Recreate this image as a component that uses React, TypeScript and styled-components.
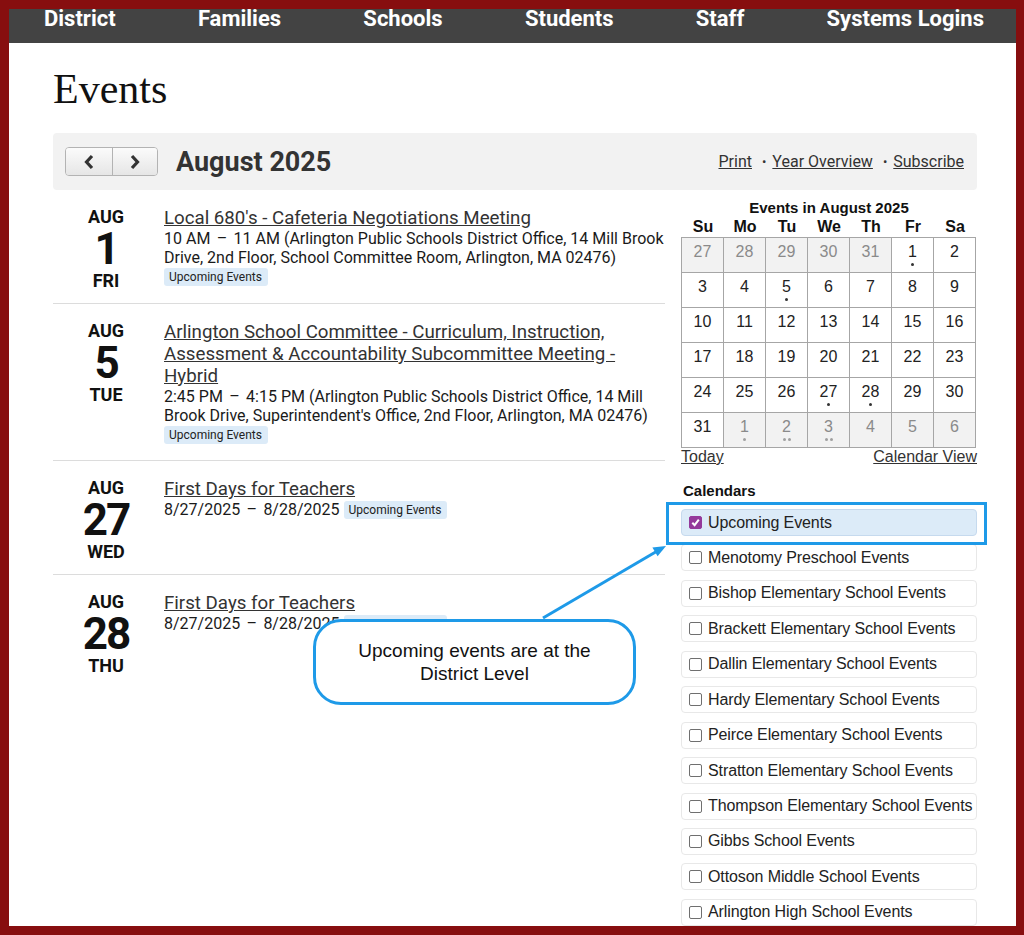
import React from "react";
import styled, { createGlobalStyle } from "styled-components";

const GlobalStyle = createGlobalStyle`
  html, body {
    margin: 0;
    padding: 0;
  }
  body {
    font-family: Roboto, "Liberation Sans", sans-serif;
  }
`;

const navItems = ["District", "Families", "Schools", "Students", "Staff", "Systems Logins"];

type EventItem = {
  month: string;
  day: string;
  weekday: string;
  title: string;
  start: string;
  rest: string;
  inlineTag?: boolean;
};

const events: EventItem[] = [
  {
    month: "AUG",
    day: "1",
    weekday: "FRI",
    title: "Local 680's - Cafeteria Negotiations Meeting",
    start: "10 AM",
    rest: "11 AM (Arlington Public Schools District Office, 14 Mill Brook Drive, 2nd Floor, School Committee Room, Arlington, MA 02476)",
  },
  {
    month: "AUG",
    day: "5",
    weekday: "TUE",
    title:
      "Arlington School Committee - Curriculum, Instruction, Assessment & Accountability Subcommittee Meeting - Hybrid",
    start: "2:45 PM",
    rest: "4:15 PM (Arlington Public Schools District Office, 14 Mill Brook Drive, Superintendent's Office, 2nd Floor, Arlington, MA 02476)",
  },
  {
    month: "AUG",
    day: "27",
    weekday: "WED",
    title: "First Days for Teachers",
    start: "8/27/2025",
    rest: "8/28/2025",
    inlineTag: true,
  },
  {
    month: "AUG",
    day: "28",
    weekday: "THU",
    title: "First Days for Teachers",
    start: "8/27/2025",
    rest: "8/28/2025",
    inlineTag: true,
  },
];

type Cell = { d: number; muted?: boolean; dots?: number };

const weeks: Cell[][] = [
  [
    { d: 27, muted: true },
    { d: 28, muted: true },
    { d: 29, muted: true },
    { d: 30, muted: true },
    { d: 31, muted: true },
    { d: 1, dots: 1 },
    { d: 2 },
  ],
  [{ d: 3 }, { d: 4 }, { d: 5, dots: 1 }, { d: 6 }, { d: 7 }, { d: 8 }, { d: 9 }],
  [{ d: 10 }, { d: 11 }, { d: 12 }, { d: 13 }, { d: 14 }, { d: 15 }, { d: 16 }],
  [{ d: 17 }, { d: 18 }, { d: 19 }, { d: 20 }, { d: 21 }, { d: 22 }, { d: 23 }],
  [{ d: 24 }, { d: 25 }, { d: 26 }, { d: 27, dots: 1 }, { d: 28, dots: 1 }, { d: 29 }, { d: 30 }],
  [
    { d: 31 },
    { d: 1, muted: true, dots: 1 },
    { d: 2, muted: true, dots: 2 },
    { d: 3, muted: true, dots: 2 },
    { d: 4, muted: true },
    { d: 5, muted: true },
    { d: 6, muted: true },
  ],
];

const weekdays = ["Su", "Mo", "Tu", "We", "Th", "Fr", "Sa"];

const calendars = [
  "Upcoming Events",
  "Menotomy Preschool Events",
  "Bishop Elementary School Events",
  "Brackett Elementary School Events",
  "Dallin Elementary School Events",
  "Hardy Elementary School Events",
  "Peirce Elementary School Events",
  "Stratton Elementary School Events",
  "Thompson Elementary School Events",
  "Gibbs School Events",
  "Ottoson Middle School Events",
  "Arlington High School Events",
];

export default function App() {
  return (
    <>
      <GlobalStyle />
      <Frame>
        <Page>
          <Nav>
            {navItems.map((n) => (
              <NavItem key={n} href="#">
                {n}
              </NavItem>
            ))}
          </Nav>
          <Main>
            <Heading>Events</Heading>
            <Toolbar>
              <ArrowGroup>
                <ArrowButton aria-label="Previous month">
                  <svg width="12" height="18" viewBox="0 0 12 18">
                    <polyline points="9,3 3.5,9 9,15" fill="none" stroke="#333" strokeWidth="3.2" />
                  </svg>
                </ArrowButton>
                <ArrowButton aria-label="Next month">
                  <svg width="12" height="18" viewBox="0 0 12 18">
                    <polyline points="3,3 8.5,9 3,15" fill="none" stroke="#333" strokeWidth="3.2" />
                  </svg>
                </ArrowButton>
              </ArrowGroup>
              <MonthTitle>August 2025</MonthTitle>
              <ToolLinks>
                <ToolLink href="#">Print</ToolLink>
                <Bullet>•</Bullet>
                <ToolLink href="#">Year Overview</ToolLink>
                <Bullet>•</Bullet>
                <ToolLink href="#">Subscribe</ToolLink>
              </ToolLinks>
            </Toolbar>
            <Columns>
              <EventList>
                {events.map((e, i) => (
                  <EventRow key={i} $last={i === events.length - 1}>
                    <DateBlock>
                      <DateSmall>{e.month}</DateSmall>
                      <DateBig>{e.day}</DateBig>
                      <DateSmall>{e.weekday}</DateSmall>
                    </DateBlock>
                    <Info>
                      <EventTitle href="#">{e.title}</EventTitle>
                      <Detail>
                        {e.start} <Dash>–</Dash> {e.rest}
                        {e.inlineTag && <Tag $inline>Upcoming Events</Tag>}
                      </Detail>
                      {!e.inlineTag && <Tag>Upcoming Events</Tag>}
                    </Info>
                  </EventRow>
                ))}
              </EventList>
              <Sidebar>
                <CalCaption>Events in August 2025</CalCaption>
                <WeekHeader>
                  {weekdays.map((w) => (
                    <span key={w}>{w}</span>
                  ))}
                </WeekHeader>
                <Grid>
                  {weeks.flat().map((c, i) => (
                    <DayCell key={i} $muted={c.muted}>
                      <span>{c.d}</span>
                      <Dots>
                        {Array.from({ length: c.dots || 0 }).map((_, j) => (
                          <Dot key={j} $muted={c.muted} />
                        ))}
                      </Dots>
                    </DayCell>
                  ))}
                </Grid>
                <CalFooter>
                  <FooterLink href="#">Today</FooterLink>
                  <FooterLink href="#">Calendar View</FooterLink>
                </CalFooter>
                <CalHeading>Calendars</CalHeading>
                <CalList>
                  {calendars.map((c, i) => (
                    <CalItem key={c} $checked={i === 0}>
                      <Box $checked={i === 0}>
                        {i === 0 && (
                          <svg width="9" height="9" viewBox="0 0 9 9">
                            <polyline
                              points="1.3,4.8 3.6,7.2 7.8,1.6"
                              fill="none"
                              stroke="#fff"
                              strokeWidth="2"
                            />
                          </svg>
                        )}
                      </Box>
                      {c}
                    </CalItem>
                  ))}
                </CalList>
              </Sidebar>
            </Columns>
          </Main>

          <Highlight />
          <Pointer width="150" height="95" viewBox="0 0 150 95">
            <line x1="14" y1="84" x2="130" y2="16" stroke="#1e9ae8" strokeWidth="3" />
            <polygon points="137,12 123.4,13.5 128.6,22.3" fill="#1e9ae8" />
          </Pointer>
          <Callout>
            Upcoming events are at the
            <br />
            District Level
          </Callout>
        </Page>
      </Frame>
    </>
  );
}

const Frame = styled.div`
  box-sizing: border-box;
  width: 1024px;
  height: 935px;
  background: #870e0f;
  padding: 9px 8px 9px 9px;
`;

const Page = styled.div`
  position: relative;
  height: 100%;
  background: #fff;
  overflow: hidden;
`;

const Nav = styled.nav`
  height: 34px;
  background: #434343;
  display: flex;
  justify-content: space-between;
  align-items: flex-start;
  padding: 0 32px 0 35px;
`;

const NavItem = styled.a`
  color: #fff;
  font: 700 22px/19px Roboto, sans-serif;
  text-decoration: none;
`;

const Main = styled.main`
  padding: 0 39px 0 44px;
`;

const Heading = styled.h1`
  margin: 26px 0 24px;
  font: 400 42px/40px "Liberation Serif", serif;
  color: #111;
`;

const Toolbar = styled.div`
  display: flex;
  align-items: center;
  height: 57px;
  padding: 0 13px 0 12px;
  background: #f2f2f2;
  border-radius: 4px;
`;

const ArrowGroup = styled.div`
  display: flex;
  border: 1px solid #b3b3b3;
  border-radius: 4px;
  overflow: hidden;
`;

const ArrowButton = styled.button`
  width: 46px;
  height: 27px;
  padding: 0;
  border: 0;
  background: linear-gradient(#fbfbfb, #e6e6e6);
  display: flex;
  align-items: center;
  justify-content: center;
  & + & {
    width: 45px;
    border-left: 1px solid #b3b3b3;
  }
`;

const MonthTitle = styled.h2`
  margin: 0 0 0 18px;
  font: 700 27px/32px Roboto, sans-serif;
  color: #333;
`;

const ToolLinks = styled.div`
  margin-left: auto;
  display: flex;
  align-items: center;
  font: 400 16px/20px Roboto, sans-serif;
  color: #333;
`;

const ToolLink = styled.a`
  color: #333;
  text-decoration: underline;
`;

const Bullet = styled.span`
  margin: 0 6px 0 10px;
  font-size: 13px;
`;

const Columns = styled.div`
  display: grid;
  grid-template-columns: 612px 296px;
  column-gap: 16px;
  align-items: start;
`;

const EventList = styled.div`
  display: flex;
  flex-direction: column;
`;

const EventRow = styled.div<{ $last?: boolean }>`
  display: flex;
  padding: 17px 0 12px;
  border-bottom: ${(p) => (p.$last ? "0" : "1px solid #dcdcdc")};
`;

const DateBlock = styled.div`
  width: 106px;
  flex-shrink: 0;
  margin-right: 5px;
  text-align: center;
  color: #111;
`;

const DateSmall = styled.div`
  font: 700 18px/20px Roboto, sans-serif;
`;

const DateBig = styled.div`
  font: 700 44px/44px Roboto, sans-serif;
  letter-spacing: -2px;
`;

const Info = styled.div`
  flex: 1;
  min-width: 0;
`;

const EventTitle = styled.a`
  display: block;
  font: 400 18.7px/22px Roboto, sans-serif;
  color: #333;
  text-decoration: underline;
`;

const Detail = styled.div`
  font: 400 16px/19px Roboto, sans-serif;
  color: #1a1a1a;
`;

const Dash = styled.span`
  margin: 0 2.4px;
`;

const Tag = styled.span<{ $inline?: boolean }>`
  display: inline-block;
  background: #dcebf8;
  color: #222;
  font: 400 12px/18px Roboto, sans-serif;
  padding: 0 6px 0 5px;
  border-radius: 3px;
  margin: ${(p) => (p.$inline ? "0 0 0 4px" : "1px 0 4px")};
  vertical-align: ${(p) => (p.$inline ? "1px" : "top")};
`;

const Sidebar = styled.aside`
  font-family: "Liberation Sans", Arial, sans-serif;
  color: #111;
`;

const CalCaption = styled.div`
  margin-top: 8px;
  text-align: center;
  font: 700 15px/19px "Liberation Sans", Arial, sans-serif;
`;

const WeekHeader = styled.div`
  display: grid;
  grid-template-columns: repeat(7, 42px);
  padding-left: 1px;
  font: 700 16px/20px "Liberation Sans", Arial, sans-serif;
  text-align: center;
`;

const Grid = styled.div`
  display: grid;
  grid-template-columns: repeat(7, 42px);
  width: max-content;
  border-left: 1px solid #a6a6a6;
  border-top: 1px solid #a6a6a6;
`;

const DayCell = styled.div<{ $muted?: boolean }>`
  box-sizing: border-box;
  height: 35px;
  border-right: 1px solid #a6a6a6;
  border-bottom: 1px solid #a6a6a6;
  background: ${(p) => (p.$muted ? "#f2f2f2" : "#fff")};
  color: ${(p) => (p.$muted ? "#8a8a8a" : "#222")};
  font: 400 16px/18px "Liberation Sans", Arial, sans-serif;
  text-align: center;
  padding-top: 5px;
`;

const Dots = styled.div`
  display: flex;
  justify-content: center;
  gap: 2px;
  margin-top: 2px;
`;

const Dot = styled.span<{ $muted?: boolean }>`
  width: 3px;
  height: 3px;
  border-radius: 50%;
  background: ${(p) => (p.$muted ? "#a0a0a0" : "#333")};
`;

const CalFooter = styled.div`
  display: flex;
  justify-content: space-between;
  font: 400 16px/18px "Liberation Sans", Arial, sans-serif;
`;

const FooterLink = styled.a`
  color: #333;
  text-decoration: underline;
`;

const CalHeading = styled.div`
  margin-top: 16px;
  padding-left: 2px;
  font: 700 15px/18px "Liberation Sans", Arial, sans-serif;
`;

const CalList = styled.div`
  display: flex;
  flex-direction: column;
  gap: 8.45px;
  margin-top: 9px;
`;

const CalItem = styled.label<{ $checked?: boolean }>`
  box-sizing: border-box;
  height: 27px;
  display: flex;
  align-items: center;
  padding-left: 7px;
  border: 1px solid ${(p) => (p.$checked ? "#c6daee" : "#e8e8e8")};
  border-radius: 4px;
  background: ${(p) => (p.$checked ? "#dcebf8" : "#fff")};
  font: 400 16px/18px "Liberation Sans", Arial, sans-serif;
  letter-spacing: -0.1px;
  color: #222;
  white-space: nowrap;
`;

const Box = styled.span<{ $checked?: boolean }>`
  box-sizing: border-box;
  width: 13px;
  height: 13px;
  margin-right: 6px;
  border-radius: 2px;
  border: 1px solid ${(p) => (p.$checked ? "#943a9b" : "#6f6f6f")};
  background: ${(p) => (p.$checked ? "#943a9b" : "#fff")};
  display: flex;
  align-items: center;
  justify-content: center;
  flex-shrink: 0;
`;

const Highlight = styled.div`
  position: absolute;
  left: 657px;
  top: 493px;
  width: 321px;
  height: 43px;
  box-sizing: border-box;
  border: 3px solid #1e9ae8;
  pointer-events: none;
`;

const Pointer = styled.svg`
  position: absolute;
  left: 520px;
  top: 525px;
  pointer-events: none;
`;

const Callout = styled.div`
  position: absolute;
  left: 304px;
  top: 610px;
  width: 323px;
  height: 86px;
  box-sizing: border-box;
  border: 3px solid #1e9ae8;
  border-radius: 28px;
  background: #fff;
  display: flex;
  align-items: center;
  justify-content: center;
  text-align: center;
  font: 400 19px/23px "Liberation Sans", Arial, sans-serif;
  color: #111;
`;
